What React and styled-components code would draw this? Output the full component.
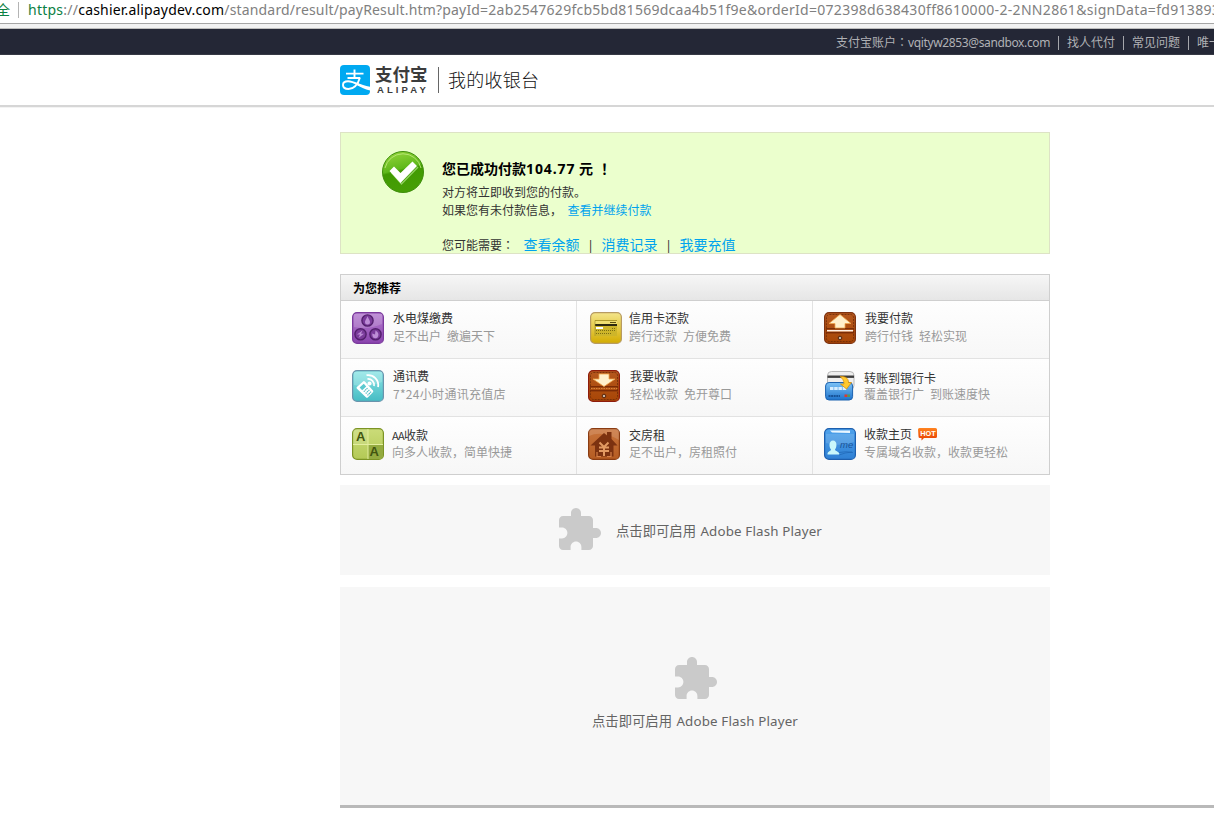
import React from 'react';
import styled, { createGlobalStyle } from 'styled-components';

const Global = createGlobalStyle`
  * { box-sizing: border-box; }
  body {
    margin: 0;
    background: #fff;
    overflow: hidden;
    font-family: "Noto Sans", "Noto Sans CJK SC", sans-serif;
    font-size: 12px;
    color: #333;
  }
  svg { display: block; flex: none; }
`;

const Page = styled.div`
  width: 1214px;
  height: 824px;
  overflow: hidden;
  display: flex;
  flex-direction: column;
`;

const AddressBar = styled.div`
  flex: none;
  height: 29px;
  display: flex;
  align-items: flex-start;
  white-space: nowrap;
  overflow: hidden;
  font-size: 14px;
  line-height: 20px;
  color: #808080;
  background: linear-gradient(#fff 23px, #a6a6a6 23px, #a6a6a6 24px, #f2f2f2 24px, #f2f2f2 28px, #bdbdbd 28px);
`;
const Secure = styled.span`
  color: #0b8043;
  width: 18px;
  margin-left: -4px;
  flex: none;
`;
const AddressRule = styled.span`
  flex: none;
  width: 1px;
  height: 16px;
  margin: 2px 9px 0 4px;
  background: #b4b4b4;
`;
const UrlPart = styled.span`
  flex: none;
  color: ${(p) => p.$color || '#808080'};
  letter-spacing: ${(p) => p.$spacing || '0'};
`;

const TopBar = styled.div`
  flex: none;
  height: 26px;
  padding-left: 836px;
  display: flex;
  align-items: center;
  white-space: nowrap;
  overflow: hidden;
  color: #b0b1b5;
  background: #242736;
  border-bottom: 1px solid #363945;
`;
const TopItem = styled.span`
  flex: none;
  padding-top: 2px;
  letter-spacing: ${(p) => p.$spacing || '0'};
  line-height: 24px;
`;
const TopRule = styled.span`
  flex: none;
  width: 1px;
  height: 14px;
  margin: 3px 8px 0;
  background: #a5a6ab;
`;
const Centered = styled.span`
  display: inline-block;
  width: 1em;
  font-family: "Noto Sans CJK TC", sans-serif;
  line-height: 1;
`;

const Header = styled.header`
  flex: none;
  height: 52px;
  padding-left: 340px;
  display: flex;
  align-items: center;
  border-bottom: 2px solid #d6d6d6;
`;
const HeaderShade = styled.div`
  flex: none;
  width: 340px;
  height: 1px;
  background: #f3f3f3;
`;
const Wordmark = styled.div`
  width: 53px;
  margin-left: 5px;
  display: flex;
  flex-direction: column;
  color: #3c3c3c;
  white-space: nowrap;
`;
const WordmarkName = styled.span`
  font: 700 17.5px/18px "Noto Sans CJK SC", sans-serif;
  margin-top: -1px;
`;
const WordmarkLatin = styled.span`
  padding: 2px 0 0 2px;
  font: 700 9.5px/9px "Liberation Sans", sans-serif;
  letter-spacing: 3.1px;
`;
const HeaderRule = styled.span`
  width: 1px;
  height: 26px;
  margin: 0 9px 0 10px;
  background: #666;
`;
const HeaderTitle = styled.h1`
  margin: 0 0 2px;
  font: 300 18px/26px "Noto Sans CJK SC", sans-serif;
  letter-spacing: 0.25px;
  color: #111;
`;

const Content = styled.main`
  width: 710px;
  margin: 24px 0 0 340px;
  display: flex;
  flex-direction: column;
  flex: none;
`;

const Success = styled.section`
  height: 122px;
  padding: 18px 0 0 40px;
  display: flex;
  align-items: flex-start;
  gap: 17px;
  border: 1px solid #dde3c5;
  background: #ebffcd;
  white-space: nowrap;
`;
const SuccessText = styled.div`
  display: flex;
  flex-direction: column;
`;
const SuccessTitle = styled.h2`
  margin: 8px 0 5px;
  display: flex;
  font-size: 14px;
  line-height: 20px;
  font-weight: 700;
  color: #000;
`;
const Amount = styled.span`
  width: 53px;
  letter-spacing: 0.9px;
`;
const Exclaim = styled.span`
  margin-left: 8px;
`;
const Line = styled.div`
  display: flex;
  align-items: baseline;
  height: 18px;
  line-height: 18px;
  margin-top: ${(p) => p.$top || 0}px;
`;
const Link = styled.a`
  color: #00a3ee;
  font-size: ${(p) => p.$size || 12}px;
  margin-left: ${(p) => p.$left || 0}px;
`;
const Pipe = styled.span`
  width: 22px;
  text-align: center;
`;

const Panel = styled.section`
  margin-top: 20px;
  border: 1px solid #cfcfcf;
`;
const PanelHead = styled.h3`
  margin: 0;
  height: 26px;
  padding: 1px 0 0 12px;
  font-size: 12px;
  line-height: 25px;
  font-weight: 700;
  color: #000;
  border-bottom: 1px solid #cfcfcf;
  background: linear-gradient(#f6f6f6, #e6e6e6);
`;
const Grid = styled.div`
  display: grid;
  grid-template-columns: 236px 236px 236px;
  grid-template-rows: 58px 58px 57px;
`;
const Cell = styled.div`
  display: flex;
  align-items: flex-start;
  padding: 11px 0 0 ${(p) => p.$left}px;
  border-right: ${(p) => (p.$lastCol ? '0' : '1px solid #e2e2e2')};
  border-bottom: ${(p) => (p.$lastRow ? '0' : '1px solid #e2e2e2')};
  background: linear-gradient(#fefefe, #f7f7f7);
  white-space: nowrap;
`;
const CellText = styled.div`
  margin: ${(p) => -3 + p.$drop}px 0 0 ${(p) => p.$gap}px;
  font-family: "Noto Sans CJK SC", sans-serif;
`;
const CellTitle = styled.div`
  height: ${(p) => 18 - p.$drop}px;
  display: flex;
  align-items: flex-start;
  gap: 6px;
  line-height: 18px;
  color: #333;
`;
const Narrow = styled.span`
  font-size: 11px;
  letter-spacing: -0.7px;
  margin-right: -6px;
`;
const CellDesc = styled.div`
  line-height: 18px;
  color: #999;
  word-spacing: 3.3px;
  letter-spacing: ${(p) => p.$spacing || '0'};
`;
const HotSlot = styled.span`
  padding-top: 3px;
`;

const Flash = styled.section`
  height: ${(p) => p.$height}px;
  margin-top: ${(p) => p.$top}px;
  padding-top: ${(p) => p.$pad}px;
  display: flex;
  flex-direction: ${(p) => (p.$stacked ? 'column' : 'row')};
  align-items: ${(p) => (p.$stacked ? 'center' : 'flex-start')};
  padding-left: ${(p) => (p.$stacked ? 0 : 215)}px;
  background: #f7f7f7;
`;
const FlashLabel = styled.span`
  margin: ${(p) => (p.$stacked ? '8px 0 0' : '15px 0 0 13px')};
  font-size: 13.33px;
  line-height: 20px;
  color: #646464;
  white-space: nowrap;
`;
const Latin = styled.span`
  margin-left: 1px;
  letter-spacing: 0.16px;
`;
const BottomRule = styled.div`
  flex: none;
  height: 3px;
  margin-left: 340px;
  background: #b9b9b9;
`;

const AlipayLogo = () => (
  <svg width="30" height="30" viewBox="0 0 30 30">
    <rect width="30" height="30" rx="4" fill="#00a9f1" />
    <g fill="none" stroke="#fff">
      <path d="M6 8.600H23.500M14.500 4.500V13M7.500 13H20" strokeWidth="1.900" />
      <path d="M20 12.500C18 19 14 24 8.500 24C5 24 3 22.300 3 20C3 17.800 5 16.300 8 16.300C12.500 16.300 18 19.500 22 21.200" strokeWidth="1.900" />
    </g>
    <path d="M17 17.800C21 19.600 25 20.800 30 21.700V25.500C25 24.300 20 21.500 16 19.400Z" fill="#fff" />
  </svg>
);

const CheckBadge = () => (
  <svg width="44" height="44" viewBox="0 0 44 44">
    <defs>
      <linearGradient id="ok" x1="0" y1="0" x2="0.25" y2="1">
        <stop offset="0" stopColor="#9ad83f" />
        <stop offset="0.5" stopColor="#5fb81b" />
        <stop offset="0.55" stopColor="#419a02" />
        <stop offset="1" stopColor="#469e05" />
      </linearGradient>
    </defs>
    <circle cx="22" cy="21" r="20.500" fill="url(#ok)" stroke="#3f8e0c" />
    <path d="M4 17A18.500 18.500 0 0 1 40 17" fill="none" stroke="#b5e573" strokeWidth="1" />
    <path d="M10.500 21.500L20.500 33L37 16" fill="none" stroke="#8fd05e" strokeWidth="1.500" />
    <path d="M8.500 20L13 15.500L19.500 22L31.500 10.500L36 15L19.500 32Z" fill="#fff" />
  </svg>
);

const Puzzle = () => (
  <svg width="48" height="48" viewBox="0 0 24 24">
    <path
      fill="#cacaca"
      d="M20.5 11H19V7c0-1.100-.9-2-2-2h-4V3.500C13 2.120 11.880 1 10.500 1S8 2.120 8 3.500V5H4c-1.100 0-1.990.9-1.990 2v3.800H3.500c1.490 0 2.700 1.210 2.700 2.700s-1.210 2.700-2.700 2.700H2V20c0 1.100.9 2 2 2h3.800v-1.500c0-1.490 1.210-2.700 2.700-2.700 1.490 0 2.700 1.210 2.700 2.700V22H17c1.100 0 2-.9 2-2v-4h1.500c1.380 0 2.500-1.120 2.500-2.500S21.880 11 20.500 11z"
    />
  </svg>
);

const Tile = ({ id, from, to, edge, children }) => (
  <svg width="32" height="32" viewBox="0 0 32 32">
    <defs>
      <linearGradient id={id} x1="0" y1="0" x2="0" y2="1">
        <stop offset="0" stopColor={from} />
        <stop offset="1" stopColor={to} />
      </linearGradient>
    </defs>
    <rect x="0.6" y="0.6" width="30.800" height="30.800" rx="4.500" fill={`url(#${id})`} stroke={edge} strokeWidth="1.200" />
    {children}
  </svg>
);

const UtilityIcon = () => (
  <Tile id="util" from="#b67fd0" to="#8a44ae" edge="#7a3a9c">
    <path d="M2 2H30V12Q16 18 2 15Z" fill="#fff" opacity="0.16" />
    <g fill="#7a3b9a" stroke="#521f6c" strokeWidth="1.400">
      <circle cx="15.500" cy="8.500" r="5.600" />
      <circle cx="8.500" cy="22.300" r="5.600" />
      <circle cx="23.500" cy="22.300" r="5.600" />
    </g>
    <g fill="#bd8dd6">
      <path d="M15.500 4.200C16.800 7 18 8.500 18 10A2.500 2.500 0 0 1 13 10C13 8.500 14.200 7 15.500 4.200Z" />
      <path d="M10.500 18.500L5 22.500H8L6.500 26L12 21.800H9Z" />
      <path d="M23.500 18.500C26 20 27 22 26.200 24A2.900 2.900 0 0 1 20.500 24L20.200 21.500L23 22.500Z" />
    </g>
  </Tile>
);

const PhoneIcon = () => (
  <Tile id="phone" from="#8fe6e6" to="#45bcc4" edge="#6a93ac">
    <path d="M2 2H30V12Q16 18 2 15Z" fill="#fff" opacity="0.18" />
    <path d="M4.600 17.200L11 11.400Q12 10.700 12.900 11.600L21 20.600Q21.700 21.500 20.900 22.300L15.800 27.400Q14.800 28.300 13.900 27.300L4.700 18.600Z" fill="#fff" />
    <path d="M7.600 17.500L11.800 13.800L14.200 16.400L10.200 20.200Z" fill="#5bc9cf" />
    <path d="M11.800 21.600L15.600 18M13.700 23.500L17.500 19.800M15.500 25.300L19.200 21.600" stroke="#4dbdc4" strokeWidth="1.200" strokeDasharray="1.300 0.600" />
    <circle cx="17.500" cy="13.500" r="2" fill="#fff" />
    <path d="M15.500 9A6 6 0 0 1 22 16M14.500 5.200A10 10 0 0 1 26 17" fill="none" stroke="#fff" strokeWidth="1.800" />
  </Tile>
);

const SplitIcon = () => (
  <Tile id="split" from="#cbdc79" to="#b3c956" edge="#7c9424">
    <path d="M16 16H31V27Q31 31 27 31H16Z" fill="#94ab40" />
    <path d="M1 1H16V16H1Z" fill="#fff" opacity="0.12" />
    <path d="M16 1V31M1 16.500H31" stroke="#e3ee9f" strokeWidth="1" />
    <g fill="#425510" fontFamily="Liberation Sans, sans-serif" fontWeight="700" fontSize="13">
      <text x="4" y="13">A</text>
      <text x="17.500" y="27.500">A</text>
    </g>
  </Tile>
);

const CardIcon = () => (
  <Tile id="card" from="#f4e58a" to="#d3ac00" edge="#b79b62">
    <rect x="5" y="8" width="22" height="16" fill="#cdb52a" />
    <rect x="5" y="9" width="22" height="3" fill="#f0df70" />
    <rect x="5" y="12" width="22" height="2" fill="#2e2a10" />
    <rect x="20" y="10" width="6" height="1" fill="#5d5110" />
    <rect x="6" y="15" width="7" height="2" fill="#fff" />
    <path d="M6 18.500H26M6 21.500H21M22 16.500H26" stroke="#7d6e12" strokeWidth="1" strokeDasharray="1 1" />
    <path d="M5 24V8.500H27" fill="none" stroke="#9a8a2c" strokeWidth="0.6" />
  </Tile>
);

const WalletIcon = ({ id, down }) => (
  <Tile id={id} from="#b5581e" to="#a84606" edge={down ? '#8e1c0c' : '#7d3210'}>
    <rect x="2.500" y="2.500" width="27" height="27" rx="3" fill="none" stroke="#6d2b08" strokeWidth="0.8" strokeDasharray="2 1" />
    <rect x="2" y="16" width="28" height="1.300" fill="#7b2c06" />
    <rect x="2" y="20" width="28" height="1.400" fill="#7b2c06" />
    {down ? (
      <path d="M3 18.500H29" stroke="#d8853c" strokeDasharray="1.500 1" />
    ) : (
      <path d="M3 18.700H29" stroke="#fff0e4" strokeWidth="1.500" />
    )}
    <circle cx="16" cy="26" r="1.800" fill="#c9b5a4" stroke="#4a1a02" strokeWidth="0.9" />
    <path
      d={down ? 'M11 4H21V9H27L16 16.500L5 9H11Z' : 'M16 2.500L27 11.500H21V16H11V11.500H5Z'}
      fill="#fff0cc"
      stroke="#efa64c"
      strokeWidth="0.8"
    />
  </Tile>
);

const HouseIcon = () => (
  <Tile id="house" from="#c9753d" to="#b55c22" edge="#8a3c12">
    <path d="M1 8Q14 2 31 12V1H1Z" fill="#fff" opacity="0.14" />
    <path d="M2.500 17.500L16 5L19 7.500V4H23.500V11L29.500 17.500H25.500V28.500H7V17.500Z" fill="#7c3210" />
    <path d="M11.500 14.500L16 19L20.500 14.500M16 19V28M11 19.500H21M11 23H21" fill="none" stroke="#e29a62" strokeWidth="2" />
    <path d="M9 24V28.500H13M23 24V28.500H19" fill="none" stroke="#d58048" strokeWidth="1.200" />
  </Tile>
);

const TransferIcon = () => (
  <svg width="32" height="32" viewBox="0 0 32 32">
    <defs>
      <linearGradient id="transfer" x1="0" y1="0" x2="0" y2="1">
        <stop offset="0" stopColor="#7cc2f6" />
        <stop offset="1" stopColor="#1f74cc" />
      </linearGradient>
    </defs>
    <rect x="2.500" y="1.500" width="26.500" height="18" rx="4" fill="#eee" stroke="#b8b8b8" />
    <rect x="2.500" y="5.500" width="26.500" height="2.400" fill="#3d3d3d" />
    <rect x="0.6" y="12.500" width="27" height="17.500" rx="3.500" fill="url(#transfer)" stroke="#1b62b0" />
    <path d="M5 18.500H22" stroke="#d6edff" strokeWidth="3" strokeDasharray="3.500 0.700" />
    <path d="M3.500 26H15" stroke="#0f4384" strokeWidth="1.500" strokeDasharray="2 0.600" />
    <rect x="19.500" y="24.500" width="3" height="2.500" fill="#e0392d" />
    <rect x="22.500" y="24.500" width="2.500" height="2.500" fill="#4f9b58" />
    <path d="M15 6.500C20 6 23.500 8 23.500 12.500H26.500L21.500 19L15.500 14H19C19 10.500 17.500 8.500 15 6.500Z" fill="#ffc92e" stroke="#d88a00" strokeWidth="0.7" />
  </svg>
);

const ProfileIcon = () => (
  <Tile id="profile" from="#4fa3ec" to="#2f80d4" edge="#1d5fae">
    <path d="M6 2.500H26V5L8 4.500Z" fill="#e9f6ff" />
    <path d="M2 6H30V14Q16 19 2 15Z" fill="#fff" opacity="0.13" />
    <path d="M9 12.500C13.500 12.500 13 19.500 11 21.500C11.500 23.500 15 23 15.500 26.500H3.500C3.500 23 6.500 23.500 7 21.500C5 19.500 4.500 12.500 9 12.500Z" fill="#c9f7fb" />
    <path d="M15 24.500Q22 23 29 24.500M15 27Q21 24.500 28 24" fill="none" stroke="#1e66b4" strokeWidth="0.7" />
    <text x="16" y="19.500" fill="#1c5498" fontFamily="Liberation Sans, sans-serif" fontStyle="italic" fontSize="9.500">me</text>
  </Tile>
);

const HotTag = () => (
  <svg width="20" height="13" viewBox="0 0 20 13">
    <defs>
      <linearGradient id="hot" x1="0" y1="0" x2="0" y2="1">
        <stop offset="0" stopColor="#ff8420" />
        <stop offset="1" stopColor="#e63c00" />
      </linearGradient>
    </defs>
    <path d="M1.500 0H17.500A1.500 1.500 0 0 1 19 1.500V8.500A1.500 1.500 0 0 1 17.500 10H6L3.500 12.500V10H2A1.500 1.500 0 0 1 0.5 8.500L0 1.500A1.500 1.500 0 0 1 1.500 0Z" fill="url(#hot)" />
    <text x="2.300" y="7.800" fill="#fff" fontFamily="Liberation Sans, sans-serif" fontWeight="700" fontSize="7.300">HOT</text>
  </svg>
);

const services = [
  { title: '水电煤缴费', desc: '足不出户 缴遍天下', icon: <UtilityIcon />, left: 11, gap: 9 },
  { title: '信用卡还款', desc: '跨行还款 方便免费', icon: <CardIcon />, left: 13, gap: 7 },
  { title: '我要付款', desc: '跨行付钱 轻松实现', icon: <WalletIcon id="pay" />, left: 11, gap: 9 },
  { title: '通讯费', desc: '7*24小时通讯充值店', icon: <PhoneIcon />, left: 11, gap: 9, spacing: '0.3px' },
  { title: '我要收款', desc: '轻松收款 免开尊口', icon: <WalletIcon id="collect" down />, left: 11, gap: 10 },
  { title: '转账到银行卡', desc: '覆盖银行广 到账速度快', icon: <TransferIcon />, left: 12, gap: 7, drop: 2 },
  { narrow: 'AA', title: '收款', desc: '向多人收款，简单快捷', icon: <SplitIcon />, left: 11, gap: 8, drop: 1 },
  { title: '交房租', desc: '足不出户，房租照付', icon: <HouseIcon />, left: 11, gap: 9, drop: 1 },
  { title: '收款主页', desc: '专属域名收款，收款更轻松', icon: <ProfileIcon />, left: 11, gap: 8, hot: true },
];

export default function App() {
  return (
    <>
      <Global />
      <Page>
        <AddressBar>
          <Secure>全</Secure>
          <AddressRule />
          <UrlPart $color="#0b8043" $spacing="0.25px">https</UrlPart>
          <UrlPart $spacing="0.25px">://</UrlPart>
          <UrlPart $color="#000" $spacing="0.18px">cashier.alipaydev.com</UrlPart>
          <UrlPart $spacing="0.17px">/standard/result/payResult.htm?payId=</UrlPart>
          <UrlPart $spacing="0.26px">2ab2547629fcb5bd81569dcaa4b51f9e&amp;orderId=</UrlPart>
          <UrlPart $spacing="0.32px">072398d638430ff8610000-2-2NN2861&amp;signData=fd913893</UrlPart>
        </AddressBar>
        <TopBar>
          <TopItem>支付宝账户<Centered>：</Centered></TopItem>
          <TopItem $spacing="-0.37px">vqityw2853@sandbox.com</TopItem>
          <TopRule />
          <TopItem>找人代付</TopItem>
          <TopRule />
          <TopItem>常见问题</TopItem>
          <TopRule />
          <TopItem>唯一</TopItem>
        </TopBar>
        <Header>
          <AlipayLogo />
          <Wordmark>
            <WordmarkName>支付宝</WordmarkName>
            <WordmarkLatin>ALIPAY</WordmarkLatin>
          </Wordmark>
          <HeaderRule />
          <HeaderTitle>我的收银台</HeaderTitle>
        </Header>
        <HeaderShade />
        <Content>
          <Success>
            <CheckBadge />
            <SuccessText>
              <SuccessTitle>
                <span>您已成功付款</span>
                <Amount>104.77</Amount>
                <span>元</span>
                <Exclaim>！</Exclaim>
              </SuccessTitle>
              <Line>对方将立即收到您的付款。</Line>
              <Line>
                如果您有未付款信息，<Link $left={5.5}>查看并继续付款</Link>
              </Line>
              <Line $top={16}>
                <span>您可能需要<Centered>：</Centered></span>
                <Link $size={14} $left={9.5}>查看余额</Link>
                <Pipe>|</Pipe>
                <Link $size={14}>消费记录</Link>
                <Pipe>|</Pipe>
                <Link $size={14}>我要充值</Link>
              </Line>
            </SuccessText>
          </Success>
          <Panel>
            <PanelHead>为您推荐</PanelHead>
            <Grid>
              {services.map((s, i) => (
                <Cell key={s.desc} $left={s.left} $lastCol={i % 3 === 2} $lastRow={i > 5}>
                  {s.icon}
                  <CellText $gap={s.gap} $drop={s.drop || 0}>
                    <CellTitle $drop={s.drop || 0}>
                      {s.narrow && <Narrow>{s.narrow}</Narrow>}
                      {s.title}
                      {s.hot && <HotSlot><HotTag /></HotSlot>}
                    </CellTitle>
                    <CellDesc $spacing={s.spacing}>{s.desc}</CellDesc>
                  </CellText>
                </Cell>
              ))}
            </Grid>
          </Panel>
          <Flash $height={90} $top={10} $pad={21}>
            <Puzzle />
            <FlashLabel>
              点击即可启用 <Latin>Adobe Flash Player</Latin>
            </FlashLabel>
          </Flash>
          <Flash $height={218} $top={12} $pad={68} $stacked>
            <Puzzle />
            <FlashLabel $stacked>
              点击即可启用 <Latin>Adobe Flash Player</Latin>
            </FlashLabel>
          </Flash>
        </Content>
        <BottomRule />
      </Page>
    </>
  );
}
